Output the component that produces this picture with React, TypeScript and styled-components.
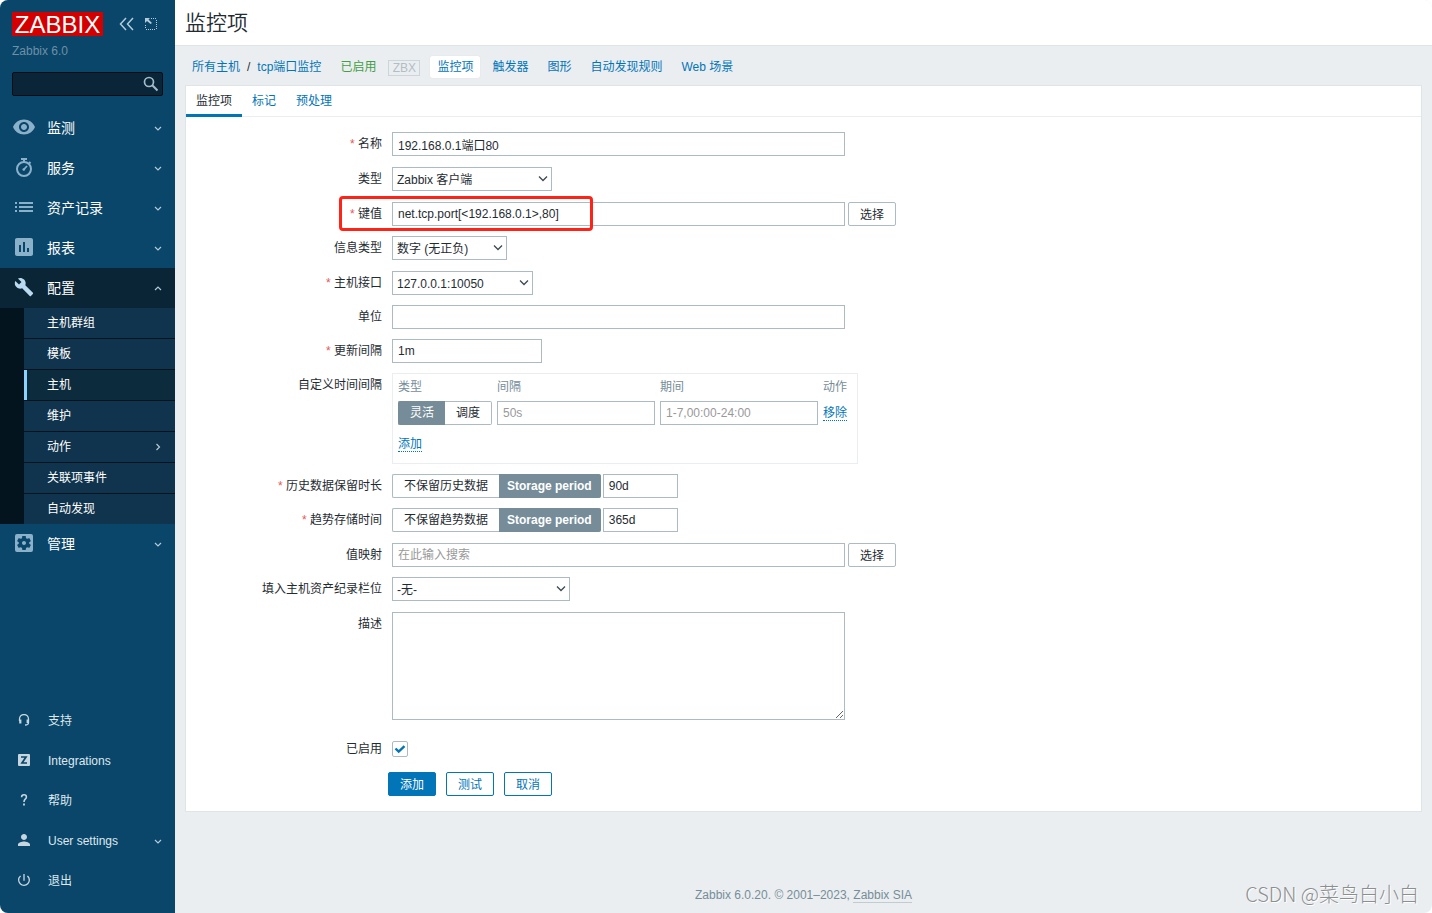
import React, { useState } from "react";
import styled, { createGlobalStyle, css } from "styled-components";
import {
  MdAssessment,
  MdBuild,
  MdList,
  MdPerson,
  MdPowerSettingsNew,
  MdSettingsApplications,
  MdVisibility,
} from "react-icons/md";

const GlobalStyle = createGlobalStyle`
  *, *::before, *::after { box-sizing: border-box; }
  body {
    margin: 0;
    background: #fff;
    color: #1f2c33;
    font-family: "Liberation Sans", "Noto Sans CJK SC", sans-serif;
    font-size: 12px;
    line-height: 16px;
  }
  button, input, select, textarea { font: inherit; color: inherit; margin: 0; }
  a { color: #0275b8; text-decoration: none; }
`;

const Shell = styled.div`
  position: relative;
  display: flex;
  min-height: 100vh;
  border-radius: 8px;
  overflow: hidden;
  background: #ebeef0;
`;

/* ---------- Sidebar ---------- */

const Sidebar = styled.aside`
  flex: none;
  display: flex;
  flex-direction: column;
  width: 175px;
  padding-bottom: 13px;
  background: #0a466a;
  color: #fff;
`;

const Brand = styled.div`
  display: flex;
  align-items: center;
  gap: 9px;
  padding: 12px 12px 0;
`;

const Logo = styled.a`
  flex: none;
  width: 91px;
  height: 24px;
  margin-right: 7px;
  background: #d40000;
  color: #fff;
  font-size: 24px;
  line-height: 25px;
  text-align: center;
`;

const BrandButton = styled.button`
  flex: none;
  display: flex;
  padding: 0;
  border: 0;
  background: none;
  color: #b3cbdb;
`;

const ServerName = styled.div`
  padding: 7px 12px 0;
  color: #6d90a6;
`;

const Search = styled.form`
  display: flex;
  align-items: center;
  height: 24px;
  margin: 13px 12px 12px;
  padding-right: 3px;
  background: #0a2537;
  border: 1px solid #030d14;
  border-radius: 2px;
`;

const SearchInput = styled.input`
  flex: 1;
  min-width: 0;
  padding: 0 5px;
  border: 0;
  outline: 0;
  background: none;
`;

const SearchButton = styled.button`
  display: flex;
  padding: 0;
  border: 0;
  background: none;
  color: #a3bccb;
`;

const MenuList = styled.ul`
  margin: 0;
  padding: 0;
  list-style: none;
`;

const MenuLink = styled.a<{ $open?: boolean }>`
  display: flex;
  align-items: center;
  height: 40px;
  padding: 0 12px;
  color: #fff;
  font-size: 14px;
  background: ${(p) => (p.$open ? "#0a2536" : "transparent")};
`;

const MenuIcon = styled.span<{ $bright?: boolean }>`
  display: flex;
  justify-content: center;
  width: 24px;
  margin-right: 11px;
  padding-bottom: 2px;
  color: ${(p) => (p.$bright ? "#b9daf0" : "#8bb1ca")};
`;

const Grow = styled.span`
  flex: 1;
`;

const Chevron = styled.span`
  display: flex;
  color: #b5cad8;
`;

const SubMenu = styled.ul`
  margin: 0;
  padding: 0 0 0 24px;
  list-style: none;
  background: #04141e;
`;

const SubItem = styled.li`
  & + & {
    border-top: 1px solid #04141e;
  }
`;

const SubLink = styled.a<{ $current?: boolean }>`
  display: flex;
  align-items: center;
  height: 30px;
  padding: 0 12px 0 20px;
  border-left: 3px solid ${(p) => (p.$current ? "#8bd2ff" : "#10344d")};
  background: ${(p) => (p.$current ? "#0c2c3e" : "#10344d")};
  color: #fff;
`;

const BottomMenu = styled(MenuList)`
  margin-top: auto;
`;

const BottomLink = styled(MenuLink)`
  padding-top: 1px;
  font-size: 12px;
  color: #dfe8ee;
`;

const BottomIcon = styled(MenuIcon)`
  margin-right: 12px;
  padding-bottom: 1px;
  color: #c6d6e0;
`;

/* ---------- Page ---------- */

const Main = styled.main`
  flex: 1;
  min-width: 0;
  display: flex;
  flex-direction: column;
`;

const PageHeader = styled.header`
  display: flex;
  align-items: center;
  height: 46px;
  padding: 0 10px 4px;
  background: #fff;
  border-bottom: 1px solid #dfe4e7;
`;

const Title = styled.h1`
  margin: 0;
  font-family: "Noto Sans CJK SC", sans-serif;
  font-size: 21px;
  line-height: 24px;
  font-weight: 350;
`;

const HostNav = styled.nav`
  display: flex;
  align-items: center;
  height: 39px;
  padding: 3px 17px 0;
`;

const Crumbs = styled.div`
  display: flex;
  gap: 7px;
  margin-right: 19px;
`;

const HostStatus = styled.span`
  margin-right: 12px;
  color: #429e47;
`;

const Availability = styled.span`
  width: 32px;
  height: 16px;
  margin: 2px 10px 0 0;
  border: 1px solid #ccd5d9;
  line-height: 15px;
  text-align: center;
  color: #b2bec4;
`;

const HostTabs = styled.div`
  display: flex;
  gap: 5px;
`;

const HostTab = styled.a<{ $current?: boolean }>`
  padding: 0 7px;
  line-height: 22px;
  border-radius: 2px;
  ${(p) =>
    p.$current &&
    css`
      background: #fff;
      box-shadow: 0 0 1px #c8d0d4;
    `}
`;

const Panel = styled.form`
  margin: 0 10px;
  padding-bottom: 15px;
  background: #fff;
  border: 1px solid #dfe4e7;
`;

const Tabs = styled.div`
  display: flex;
  border-bottom: 1px solid #ebeef0;
`;

const Tab = styled.a<{ $current?: boolean }>`
  height: 31px;
  margin-bottom: -1px;
  padding: 0 10px;
  line-height: 31px;
  border-bottom: 3px solid transparent;
  ${(p) =>
    p.$current &&
    css`
      color: #1f2c33;
      border-bottom-color: #0275b8;
    `}
`;

const Fields = styled.div`
  display: grid;
  gap: 10px;
  padding: 15px 10px 0 0;
`;

const Row = styled.div<{ $tall?: boolean }>`
  position: relative;
  display: grid;
  grid-template-columns: 196px minmax(0, 1fr);
  column-gap: 10px;
  min-height: ${(p) => (p.$tall ? 25 : 24)}px;
`;

const LabelCell = styled.label<{ $required?: boolean }>`
  padding-top: 1px;
  line-height: 23px;
  text-align: right;
  ${(p) =>
    p.$required &&
    css`
      &::before {
        content: "* ";
        color: #e45959;
      }
    `}
`;

const Control = styled.div<{ $gap?: number }>`
  display: flex;
  align-items: flex-start;
  gap: ${(p) => p.$gap ?? 3}px;
`;

const TextInput = styled.input<{ $w: number }>`
  width: ${(p) => p.$w}px;
  height: 24px;
  padding: 0 5px;
  border: 1px solid #acbbc2;
  border-radius: 0;
  background: #fff;
  outline: 0;
  &::placeholder {
    color: #999;
    opacity: 1;
  }
`;

const TextArea = styled.textarea`
  display: block;
  width: 453px;
  height: 108px;
  margin-bottom: 7px;
  padding: 4px 5px;
  border: 1px solid #acbbc2;
  outline: 0;
  background: #fff;
`;

const SelectBox = styled.div`
  position: relative;
`;

const SelectInput = styled.select<{ $w: number }>`
  appearance: none;
  display: block;
  width: ${(p) => p.$w}px;
  height: 24px;
  padding: 1px 20px 0 4px;
  border: 1px solid #acbbc2;
  border-radius: 0;
  background: #fff;
  outline: 0;
`;

const SelectArrow = styled.svg`
  position: absolute;
  top: 8px;
  right: 4px;
  pointer-events: none;
`;

const Button = styled.button<{ $kind?: "primary" | "outline" }>`
  width: 48px;
  height: 24px;
  padding: 2px 0 0;
  border: 1px solid ${(p) => (p.$kind ? "#0275b8" : "#acbbc2")};
  border-radius: 2px;
  background: ${(p) => (p.$kind === "primary" ? "#0275b8" : "#fff")};
  color: ${(p) =>
    p.$kind === "primary" ? "#fff" : p.$kind ? "#0275b8" : "#1f2c33"};
`;

const Segments = styled.div`
  display: flex;
  height: 24px;
`;

const Segment = styled.label`
  padding: 0 11px;
  line-height: 22px;
  border: 1px solid #acbbc2;
  &:first-child {
    border-right: 0;
    border-radius: 2px 0 0 2px;
  }
  &:last-child {
    border-left: 0;
    border-radius: 0 2px 2px 0;
  }
  &:has(input:checked) {
    background: #768d99;
    border-color: #768d99;
    color: #fff;
  }
  &:lang(en) {
    padding: 0 8px;
  }
  &:has(input:checked):lang(en) {
    font-weight: 700;
  }
`;

const HiddenRadio = styled.input`
  position: absolute;
  opacity: 0;
  width: 1px;
  height: 1px;
  pointer-events: none;
`;

const IntervalBox = styled.div`
  width: 466px;
  padding: 0 5px;
  border: 1px solid #ebeef0;
`;

const IntervalTable = styled.table`
  border-collapse: collapse;
  th,
  td {
    padding: 0 5px 0 0;
    text-align: left;
  }
  th {
    height: 27px;
    padding-bottom: 2px;
    font-weight: 400;
    color: #768d99;
  }
  td {
    height: 24px;
  }
  tfoot td {
    height: 38px;
  }
`;

const ActionLink = styled.button`
  display: block;
  padding: 1px 0 0;
  border: 0;
  border-bottom: 1px dotted #0275b8;
  background: none;
  color: #0275b8;
  line-height: 14px;
`;

const CheckBox = styled.span`
  position: relative;
  display: block;
  width: 16px;
  height: 16px;
  margin-top: 4px;
  svg {
    position: absolute;
    inset: 0;
    pointer-events: none;
  }
  input:not(:checked) + svg {
    display: none;
  }
`;

const CheckInput = styled.input`
  appearance: none;
  display: block;
  width: 16px;
  height: 16px;
  border: 1px solid #acbbc2;
  border-radius: 2px;
  background: #fff;
`;

const Actions = styled.div`
  display: flex;
  gap: 10px;
  margin: 11px 0 0 202px;
`;

const Highlight = styled.span`
  position: absolute;
  top: -6px;
  left: 153px;
  width: 254px;
  height: 35px;
  border: 3px solid #ff2216;
  border-radius: 4px;
  pointer-events: none;
`;

const Footer = styled.footer`
  margin-top: auto;
  padding: 0 0 10px;
  text-align: center;
  color: #768d99;
  a {
    color: #768d99;
    border-bottom: 1px solid #c1cbd0;
  }
`;

const Watermark = styled.span`
  position: absolute;
  right: 13px;
  bottom: 7px;
  font-family: "Noto Sans CJK SC", sans-serif;
  font-weight: 300;
  font-size: 20px;
  line-height: 24px;
  color: #8c8f91;
  text-shadow: 1px 1px 0 #fff;
  pointer-events: none;
`;

/* ---------- Icons ---------- */

const Caret = ({ dir = "down" }: { dir?: "down" | "up" | "right" }) => {
  const d = {
    down: "M1 3 4 6l3-3",
    up: "M1 6 4 3l3 3",
    right: "M2.500 1 5.500 4 2.500 7",
  }[dir];
  return (
    <Chevron>
      <svg width="10" height="8" viewBox="-1 0 10 8" fill="none" stroke="currentColor" strokeWidth="1.200">
        <path d={d} />
      </svg>
    </Chevron>
  );
};

const Stopwatch = () => (
  <svg width="24" height="24" viewBox="0 0 24 24" fill="none" stroke="currentColor" strokeWidth="2">
    <circle cx="12" cy="14" r="7" />
    <path d="M9 4h6M12 4v3M17 7l1.500 1.500" />
    <path d="M11.300 15 15 11" strokeWidth="1.800" />
    <circle cx="11.800" cy="14.500" r="1.300" fill="currentColor" stroke="none" />
  </svg>
);

const Headset = () => (
  <svg width="12" height="12" viewBox="0 0 12 12" fill="none" stroke="currentColor">
    <path d="M1.500 7V5a4.500 4.500 0 0 1 9 0v3.500q0 2.500-3.500 2.500" strokeWidth="1.300" />
    <path d="M2.300 5.500v4M9.700 5.500v3.500" strokeWidth="2.200" />
  </svg>
);

const ZSquare = () => (
  <svg width="12" height="12" viewBox="0 0 12 12">
    <rect width="12" height="12" rx="1" fill="currentColor" />
    <path d="M3 3h5L4 9h5" fill="none" stroke="#0a466a" strokeWidth="1.700" />
  </svg>
);

const Question = () => (
  <svg width="12" height="14" viewBox="0 0 12 14" fill="none" stroke="currentColor" strokeWidth="1.600">
    <path d="M3.600 4.200Q3.600 1.800 6 1.800t2.400 2.100Q8.400 5.200 7.200 6.200T6 9" />
    <path d="M6 10.500v2" strokeWidth="1.800" />
  </svg>
);

const CollapseIcon = () => (
  <svg width="16" height="14" viewBox="0 0 16 14" fill="none" stroke="currentColor" strokeWidth="1.500">
    <path d="M7 1 1.500 7 7 13M14 1 8.500 7l5.500 6" />
  </svg>
);

const CompactIcon = () => (
  <svg width="14" height="14" viewBox="0 0 14 14" fill="none" stroke="currentColor">
    <path d="M7 1.500h6M12.500 3v10M11 12.500H1M1.500 11V7" strokeDasharray="1 1" />
    <path d="M1 1h5L4.500 2.500 8 6 6.500 7 3 4 1 6z" fill="currentColor" stroke="none" />
  </svg>
);

const SearchIcon = () => (
  <svg width="16" height="16" viewBox="0 0 16 16" fill="none" stroke="currentColor">
    <circle cx="6" cy="6" r="4.500" strokeWidth="1.700" />
    <path d="m9.300 9.300 5.200 5.200" strokeWidth="2" />
  </svg>
);

/* ---------- Composite parts ---------- */

interface FieldProps {
  label: string;
  id?: string;
  required?: boolean;
  tall?: boolean;
  gap?: number;
  children: React.ReactNode;
}

const Field = ({ label, id, required, tall, gap, children }: FieldProps) => (
  <Row $tall={tall}>
    <LabelCell htmlFor={id} $required={required}>
      {label}
    </LabelCell>
    <Control $gap={gap}>{children}</Control>
  </Row>
);

const Select = ({ id, width, option }: { id: string; width: number; option: string }) => (
  <SelectBox>
    <SelectInput id={id} $w={width}>
      <option>{option}</option>
    </SelectInput>
    <SelectArrow width="10" height="8" viewBox="0 0 10 8" fill="none" stroke="#3d4a51" strokeWidth="1.300">
      <path d="M1 1.500 5 5.500l4-4" />
    </SelectArrow>
  </SelectBox>
);

interface Choice {
  text: string;
  lang?: string;
}

const Segmented = ({ name, choices, initial }: { name: string; choices: Choice[]; initial: number }) => {
  const [value, setValue] = useState(initial);
  return (
    <Segments role="radiogroup">
      {choices.map((c, i) => (
        <Segment key={c.text} lang={c.lang ?? "zh"}>
          <HiddenRadio type="radio" name={name} checked={value === i} onChange={() => setValue(i)} />
          {c.text}
        </Segment>
      ))}
    </Segments>
  );
};

const topMenu = [
  { text: "监测", icon: <MdVisibility size={24} /> },
  { text: "服务", icon: <Stopwatch /> },
  { text: "资产记录", icon: <MdList size={24} /> },
  { text: "报表", icon: <MdAssessment size={24} /> },
];

const configMenu = ["主机群组", "模板", "主机", "维护", "动作", "关联项事件", "自动发现"];

const bottomMenu = [
  { text: "支持", icon: <Headset /> },
  { text: "Integrations", icon: <ZSquare /> },
  { text: "帮助", icon: <Question /> },
  { text: "User settings", icon: <MdPerson size={18} />, more: true },
  { text: "退出", icon: <MdPowerSettingsNew size={16} /> },
];

const hostTabs = ["监控项", "触发器", "图形", "自动发现规则", "Web 场景"];

export default function App() {
  return (
    <Shell>
      <GlobalStyle />
      <Sidebar>
        <Brand>
          <Logo href="#">ZABBIX</Logo>
          <BrandButton type="button" aria-label="Collapse">
            <CollapseIcon />
          </BrandButton>
          <BrandButton type="button" aria-label="Compact">
            <CompactIcon />
          </BrandButton>
        </Brand>
        <ServerName>Zabbix 6.0</ServerName>
        <Search>
          <SearchInput type="search" aria-label="Search" />
          <SearchButton type="button" aria-label="Search">
            <SearchIcon />
          </SearchButton>
        </Search>
        <MenuList>
          {topMenu.map((m) => (
            <li key={m.text}>
              <MenuLink href="#">
                <MenuIcon>{m.icon}</MenuIcon>
                <Grow>{m.text}</Grow>
                <Caret />
              </MenuLink>
            </li>
          ))}
          <li>
            <MenuLink href="#" $open>
              <MenuIcon $bright>
                <MdBuild size={20} />
              </MenuIcon>
              <Grow>配置</Grow>
              <Caret dir="up" />
            </MenuLink>
            <SubMenu>
              {configMenu.map((t) => (
                <SubItem key={t}>
                  <SubLink href="#" $current={t === "主机"}>
                    <Grow>{t}</Grow>
                    {t === "动作" && <Caret dir="right" />}
                  </SubLink>
                </SubItem>
              ))}
            </SubMenu>
          </li>
          <li>
            <MenuLink href="#">
              <MenuIcon>
                <MdSettingsApplications size={24} />
              </MenuIcon>
              <Grow>管理</Grow>
              <Caret />
            </MenuLink>
          </li>
        </MenuList>
        <BottomMenu>
          {bottomMenu.map((m) => (
            <li key={m.text}>
              <BottomLink href="#">
                <BottomIcon>{m.icon}</BottomIcon>
                <Grow>{m.text}</Grow>
                {m.more && <Caret />}
              </BottomLink>
            </li>
          ))}
        </BottomMenu>
      </Sidebar>

      <Main>
        <PageHeader>
          <Title>监控项</Title>
        </PageHeader>
        <HostNav>
          <Crumbs>
            <a href="#">所有主机</a>
            <span>/</span>
            <a href="#">tcp端口监控</a>
          </Crumbs>
          <HostStatus>已启用</HostStatus>
          <Availability>ZBX</Availability>
          <HostTabs>
            {hostTabs.map((t, i) => (
              <HostTab key={t} href="#" $current={i === 0}>
                {t}
              </HostTab>
            ))}
          </HostTabs>
        </HostNav>

        <Panel>
          <Tabs>
            <Tab href="#" $current>
              监控项
            </Tab>
            <Tab href="#">标记</Tab>
            <Tab href="#">预处理</Tab>
          </Tabs>
          <Fields>
            <Field label="名称" id="name" required tall>
              <TextInput id="name" $w={453} defaultValue="192.168.0.1端口80" />
            </Field>
            <Field label="类型" id="type" tall>
              <Select id="type" width={160} option="Zabbix 客户端" />
            </Field>
            <Row>
              <LabelCell htmlFor="key" $required>
                键值
              </LabelCell>
              <Control>
                <TextInput id="key" $w={453} defaultValue="net.tcp.port[<192.168.0.1>,80]" />
                <Button type="button">选择</Button>
              </Control>
              <Highlight />
            </Row>
            <Field label="信息类型" id="value-type" tall>
              <Select id="value-type" width={115} option="数字 (无正负)" />
            </Field>
            <Field label="主机接口" id="interface" required>
              <Select id="interface" width={141} option="127.0.0.1:10050" />
            </Field>
            <Field label="单位" id="units">
              <TextInput id="units" $w={453} />
            </Field>
            <Field label="更新间隔" id="delay" required>
              <TextInput id="delay" $w={150} defaultValue="1m" />
            </Field>
            <Field label="自定义时间间隔">
              <IntervalBox>
                <IntervalTable>
                  <thead>
                    <tr>
                      <th>类型</th>
                      <th>间隔</th>
                      <th>期间</th>
                      <th>动作</th>
                    </tr>
                  </thead>
                  <tbody>
                    <tr>
                      <td>
                        <Segmented name="interval-type" initial={0} choices={[{ text: "灵活" }, { text: "调度" }]} />
                      </td>
                      <td>
                        <TextInput $w={158} placeholder="50s" aria-label="间隔" />
                      </td>
                      <td>
                        <TextInput $w={158} placeholder="1-7,00:00-24:00" aria-label="期间" />
                      </td>
                      <td>
                        <ActionLink type="button">移除</ActionLink>
                      </td>
                    </tr>
                  </tbody>
                  <tfoot>
                    <tr>
                      <td colSpan={4}>
                        <ActionLink type="button">添加</ActionLink>
                      </td>
                    </tr>
                  </tfoot>
                </IntervalTable>
              </IntervalBox>
            </Field>
            <Field label="历史数据保留时长" id="history" required gap={2}>
              <Segmented
                name="history-mode"
                initial={1}
                choices={[{ text: "不保留历史数据" }, { text: "Storage period", lang: "en" }]}
              />
              <TextInput id="history" $w={75} defaultValue="90d" />
            </Field>
            <Field label="趋势存储时间" id="trends" required tall gap={2}>
              <Segmented
                name="trends-mode"
                initial={1}
                choices={[{ text: "不保留趋势数据" }, { text: "Storage period", lang: "en" }]}
              />
              <TextInput id="trends" $w={75} defaultValue="365d" />
            </Field>
            <Field label="值映射" id="valuemap">
              <TextInput id="valuemap" $w={453} placeholder="在此输入搜索" />
              <Button type="button">选择</Button>
            </Field>
            <Field label="填入主机资产纪录栏位" id="inventory" tall>
              <Select id="inventory" width={178} option="-无-" />
            </Field>
            <Field label="描述" id="description">
              <TextArea id="description" />
            </Field>
            <Field label="已启用" id="enabled">
              <CheckBox>
                <CheckInput id="enabled" type="checkbox" defaultChecked />
                <svg width="16" height="16" viewBox="0 0 16 16" fill="none" stroke="#0275b8" strokeWidth="2.400">
                  <path d="m3.500 7.500 3.200 3.200 5.800-5.500" />
                </svg>
              </CheckBox>
            </Field>
          </Fields>
          <Actions>
            <Button type="button" $kind="primary">
              添加
            </Button>
            <Button type="button" $kind="outline">
              测试
            </Button>
            <Button type="button" $kind="outline">
              取消
            </Button>
          </Actions>
        </Panel>

        <Footer>
          Zabbix 6.0.20. © 2001–2023, <a href="#">Zabbix SIA</a>
        </Footer>
      </Main>
      <Watermark>CSDN @菜鸟白小白</Watermark>
    </Shell>
  );
}
